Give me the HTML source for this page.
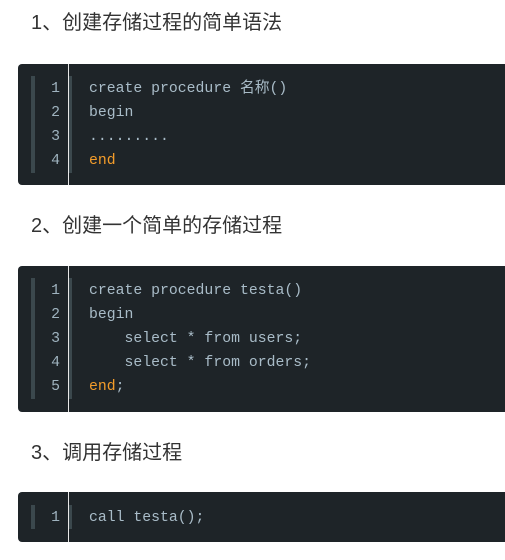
<!DOCTYPE html>
<html><head><meta charset="utf-8"><style>
body{margin:0;width:505px;height:560px;background:#fff;overflow:hidden;position:relative;font-family:"Liberation Sans","Noto Sans CJK SC",sans-serif}
h3{position:absolute;left:31px;margin:0;font-weight:normal;font-size:20px;color:#333;line-height:24px}
.code{position:absolute;left:18px;width:500px;background:#1e2428;border-radius:4px;overflow:hidden}
.gl{position:absolute;left:13px;width:4px;background:#3b484d}
.sep{position:absolute;left:50px;top:0;bottom:0;width:1px;background:#e8e8e8}
.sep2{position:absolute;left:51px;width:3px;background:#3b484d}
.ln{position:absolute;left:20px;width:22px;text-align:right;font:14.8px/24px "Liberation Mono",monospace;color:#9fb3bf}
.src{position:absolute;left:71px;font:14.8px/24px "Liberation Mono","Noto Sans CJK SC",monospace;color:#a9bcc8;white-space:pre}
.k{color:#f39c2a}
</style></head><body>
<h3 style="top:11px">1、创建存储过程的简单语法</h3>
<div class="code" style="top:64px;height:121px">
<div class="gl" style="top:12px;height:97px"></div><div class="sep"></div><div class="sep2" style="top:12px;height:97px"></div>
<div class="ln" style="top:13px">1<br>2<br>3<br>4</div>
<div class="src" style="top:13px">create procedure 名称()
begin
.........
<span class="k">end</span></div>
</div>
<h3 style="top:214px">2、创建一个简单的存储过程</h3>
<div class="code" style="top:266px;height:146px">
<div class="gl" style="top:12px;height:121px"></div><div class="sep"></div><div class="sep2" style="top:12px;height:121px"></div>
<div class="ln" style="top:13px">1<br>2<br>3<br>4<br>5</div>
<div class="src" style="top:13px">create procedure testa()
begin
    select * from users;
    select * from orders;
<span class="k">end</span>;</div>
</div>
<h3 style="top:441px">3、调用存储过程</h3>
<div class="code" style="top:492px;height:50px">
<div class="gl" style="top:13px;height:24px"></div><div class="sep"></div><div class="sep2" style="top:13px;height:24px"></div>
<div class="ln" style="top:14px">1</div>
<div class="src" style="top:14px">call testa();</div>
</div>
</body></html>
